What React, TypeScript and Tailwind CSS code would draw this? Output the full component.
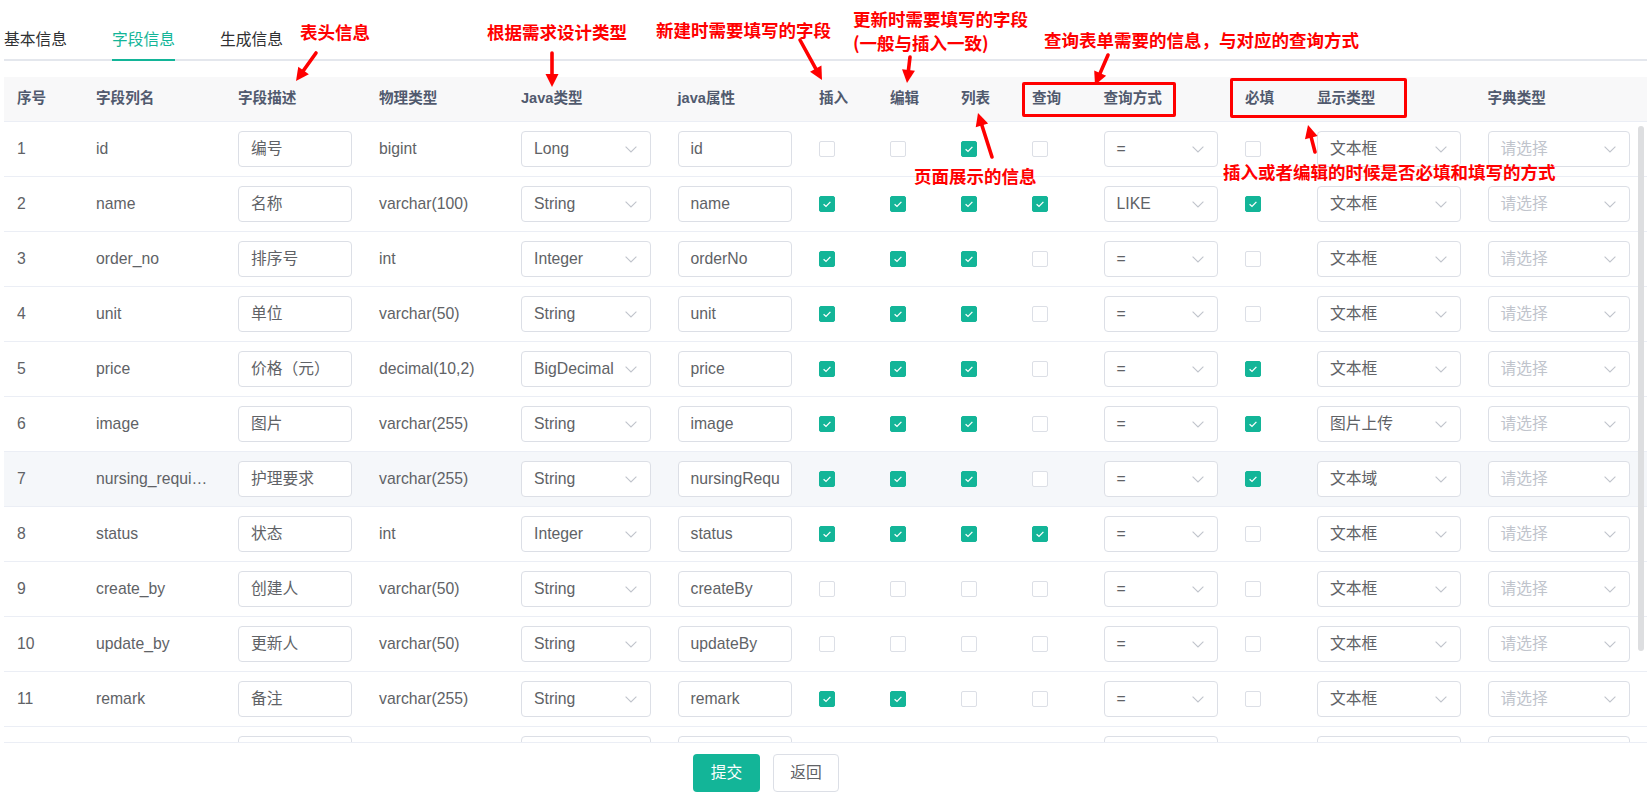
import React from "react";

type Row = {
  n: number | string;
  col: string;
  desc: string;
  type: string;
  java: string;
  attr: string;
  ins: boolean;
  edit: boolean;
  list: boolean;
  q: boolean;
  qt: string;
  req: boolean;
  show: string;
  ph: string;
  hover?: boolean;
};

const r = (
  n: number | string,
  col: string,
  desc: string,
  type: string,
  java: string,
  attr: string,
  flags: string,
  qt: string,
  show: string,
  hover = false,
  ph = "请选择"
): Row => ({
  n,
  col,
  desc,
  type,
  java,
  attr,
  ins: flags[0] === "1",
  edit: flags[1] === "1",
  list: flags[2] === "1",
  q: flags[3] === "1",
  req: flags[4] === "1",
  qt,
  show,
  hover,
  ph,
});

const rows: Row[] = [
  r(1, "id", "编号", "bigint", "Long", "id", "00100", "=", "文本框"),
  r(2, "name", "名称", "varchar(100)", "String", "name", "11111", "LIKE", "文本框"),
  r(3, "order_no", "排序号", "int", "Integer", "orderNo", "11100", "=", "文本框"),
  r(4, "unit", "单位", "varchar(50)", "String", "unit", "11100", "=", "文本框"),
  r(5, "price", "价格（元）", "decimal(10,2)", "BigDecimal", "price", "11101", "=", "文本框"),
  r(6, "image", "图片", "varchar(255)", "String", "image", "11101", "=", "图片上传"),
  r(7, "nursing_requi…", "护理要求", "varchar(255)", "String", "nursingRequ", "11101", "=", "文本域", true),
  r(8, "status", "状态", "int", "Integer", "status", "11110", "=", "文本框"),
  r(9, "create_by", "创建人", "varchar(50)", "String", "createBy", "00000", "=", "文本框"),
  r(10, "update_by", "更新人", "varchar(50)", "String", "updateBy", "00000", "=", "文本框"),
  r(11, "remark", "备注", "varchar(255)", "String", "remark", "11000", "=", "文本框"),
  r("", "", "", "", "", "", "00000", "", "", false, ""),
];

const GRID =
  "grid grid-cols-[79px_142px_141px_142px_156.5px_141.5px_71px_71px_71px_71.5px_141.5px_72px_170.5px_1fr]";

function Cb({ on }: { on: boolean }) {
  return on ? (
    <span className="flex h-[16px] w-[16px] items-center justify-center rounded-[2px] border border-[#13b598] bg-[#13b598]">
      <svg width="10" height="8" viewBox="0 0 10 8">
        <path d="M1.6 4.3 L4 6.4 L8.4 1.9" fill="none" stroke="#ffffff" strokeWidth="1.3" />
      </svg>
    </span>
  ) : (
    <span className="block h-[16px] w-[16px] rounded-[2px] border border-[#dcdfe6] bg-white" />
  );
}

function Input({ v }: { v: string }) {
  return (
    <div className="flex h-[36px] w-full items-center overflow-hidden whitespace-nowrap rounded-[4px] border border-[#dcdfe6] bg-white pl-[12px] text-[#606266]">
      {v}
    </div>
  );
}

function Chevron() {
  return (
    <svg width="12" height="7" viewBox="0 0 12 7" className="absolute right-[13px] top-[14px]">
      <polyline points="0.6,0.6 6,6 11.4,0.6" fill="none" stroke="#c0c4cc" strokeWidth="1.1" />
    </svg>
  );
}

function Select({ v, ph, w }: { v?: string; ph?: string; w?: string }) {
  return (
    <div
      className={
        "relative flex h-[36px] items-center overflow-hidden whitespace-nowrap rounded-[4px] border border-[#dcdfe6] bg-white pl-[12px] " +
        (w ? w : "w-full")
      }
    >
      {v ? <span className="text-[#606266]">{v}</span> : ph ? <span className="text-[#c0c4cc]">{ph}</span> : null}
      <Chevron />
    </div>
  );
}

function Cell({ children, cls = "" }: { children: React.ReactNode; cls?: string }) {
  return <div className={"flex items-center pl-[13px] pr-[14px] " + cls}>{children}</div>;
}

function Arrow({ x1, y1, x2, y2 }: { x1: number; y1: number; x2: number; y2: number }) {
  const dx = x2 - x1;
  const dy = y2 - y1;
  const len = Math.hypot(dx, dy);
  const ux = dx / len;
  const uy = dy / len;
  const hl = 13;
  const hw = 6.5;
  const bx = x2 - ux * hl;
  const by = y2 - uy * hl;
  const px = -uy;
  const py = ux;
  return (
    <g>
      <line x1={x1} y1={y1} x2={bx + ux * 2} y2={by + uy * 2} stroke="#ff0000" strokeWidth={3.6} strokeLinecap="round" />
      <polygon
        points={`${x2},${y2} ${bx + px * hw},${by + py * hw} ${bx - px * hw},${by - py * hw}`}
        fill="#ff0000"
      />
    </g>
  );
}

function Note({ children, cls }: { children: React.ReactNode; cls: string }) {
  return (
    <div
      className={
        "absolute whitespace-nowrap text-[17.5px] font-bold leading-[24px] text-[#ff0000] [font-family:'Noto_Sans_CJK_SC','Liberation_Sans',sans-serif] " +
        cls
      }
    >
      {children}
    </div>
  );
}

export default function App() {
  const headers = [
    "序号",
    "字段列名",
    "字段描述",
    "物理类型",
    "Java类型",
    "java属性",
    "插入",
    "编辑",
    "列表",
    "查询",
    "查询方式",
    "必填",
    "显示类型",
    "字典类型",
  ];
  return (
    <div className="relative h-[799px] w-[1647px] overflow-hidden bg-white text-[15.75px] [font-family:'Liberation_Sans','Noto_Sans_CJK_SC',sans-serif]">
      <div className="pl-[4px]">
        {/* tabs */}
        <div className="flex h-[61px] border-b-2 border-[#e4e7ed] text-[15.75px] text-[#303133]">
          <div className="relative mr-[22.5px] flex h-full items-center pt-[21px]">基本信息</div>
          <div className="relative mx-[22.5px] flex h-full items-center pt-[21px] text-[#13b598]">
            字段信息
            <span className="absolute bottom-[-2px] left-0 right-0 h-[2px] bg-[#13b598]" />
          </div>
          <div className="relative ml-[22.5px] flex h-full items-center pt-[21px]">生成信息</div>
        </div>

        {/* table header */}
        <div
          className={
            GRID +
            " mt-[16px] h-[45px] border-b border-[#ebeef5] bg-[#f8f8f9] text-[14.6px] font-bold text-[#515a6e]"
          }
        >
          {headers.map((h) => (
            <Cell key={h}>{h}</Cell>
          ))}
        </div>

        {/* table body */}
        <div className="h-[621px] overflow-hidden border-b border-[#ebeef5] text-[#606266]">
          {rows.map((row, i) => (
            <div
              key={i}
              className={GRID + " h-[55px] border-b border-[#ebeef5] " + (row.hover ? "bg-[#f5f7fa]" : "bg-white")}
            >
              <Cell>{row.n}</Cell>
              <Cell>{row.col}</Cell>
              <Cell>
                <Input v={row.desc} />
              </Cell>
              <Cell>{row.type}</Cell>
              <Cell>
                <Select v={row.java} />
              </Cell>
              <Cell>
                <Input v={row.attr} />
              </Cell>
              <Cell>
                <Cb on={row.ins} />
              </Cell>
              <Cell>
                <Cb on={row.edit} />
              </Cell>
              <Cell>
                <Cb on={row.list} />
              </Cell>
              <Cell>
                <Cb on={row.q} />
              </Cell>
              <Cell>
                <Select v={row.qt} />
              </Cell>
              <Cell>
                <Cb on={row.req} />
              </Cell>
              <Cell>
                <Select v={row.show} />
              </Cell>
              <Cell>
                <Select ph={row.ph} w="w-[142px]" />
              </Cell>
            </div>
          ))}
        </div>

        {/* buttons */}
        <div className="mt-[11px] flex w-[1524px] justify-center gap-[13px]">
          <button className="h-[38px] w-[67px] rounded-[4px] bg-[#13b598] text-[15.75px] text-white">提交</button>
          <button className="h-[38px] w-[66px] rounded-[4px] border border-[#dcdfe6] bg-white text-[15.75px] text-[#606266]">
            返回
          </button>
        </div>
      </div>

      {/* scrollbar thumb */}
      <div className="absolute left-[1638px] top-[126px] h-[525px] w-[6px] rounded-[3px] bg-[#dddee0]" />

      {/* annotation boxes */}
      <div className="absolute left-[1022px] top-[82px] h-[35px] w-[154px] rounded-[2px] border-[3px] border-[#ff0000]" />
      <div className="absolute left-[1230px] top-[78px] h-[40px] w-[177px] rounded-[2px] border-[3px] border-[#ff0000]" />

      {/* annotation text */}
      <Note cls="left-[300px] top-[20px]">表头信息</Note>
      <Note cls="left-[487px] top-[20px]">根据需求设计类型</Note>
      <Note cls="left-[656px] top-[18px]">新建时需要填写的字段</Note>
      <Note cls="left-[853px] top-[7px]">更新时需要填写的字段</Note>
      <Note cls="left-[853px] top-[31px]">(一般与插入一致)</Note>
      <Note cls="left-[1044px] top-[28px]">查询表单需要的信息，与对应的查询方式</Note>
      <Note cls="left-[914px] top-[164px]">页面展示的信息</Note>
      <Note cls="left-[1223px] top-[160px]">插入或者编辑的时候是否必填和填写的方式</Note>

      <svg className="pointer-events-none absolute left-0 top-0" width="1647" height="799">
        <Arrow x1={316} y1={53} x2={296} y2={81} />
        <Arrow x1={552} y1={53} x2={552} y2={87} />
        <Arrow x1={800} y1={40} x2={822} y2={80} />
        <Arrow x1={910} y1={57} x2={907} y2={83} />
        <Arrow x1={1108} y1={55} x2={1095} y2={85} />
        <Arrow x1={992} y1={157} x2={978} y2={113} />
        <Arrow x1={1315} y1={152} x2={1308} y2={125} />
      </svg>
    </div>
  );
}
